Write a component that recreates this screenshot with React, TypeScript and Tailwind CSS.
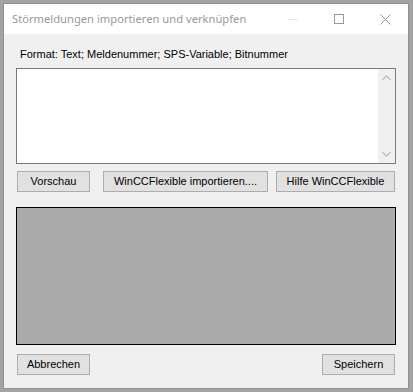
const font = { fontFamily: '"Liberation Sans", Arial, sans-serif' };

const WinButton = ({ label, className }: { label: string; className: string }) => (
  <button
    className={`h-[21px] bg-[#e1e1e1] border border-[#adadad] text-[11px] text-black leading-none flex items-center justify-center ${className}`}
  >
    {label}
  </button>
);

export default function App() {
  return (
    <div className="w-[413px] h-[392px] bg-[#a3a3a3] pt-[3px] pl-[3px]" style={font}>
      <div className="w-[406px] h-[386px] border border-[#8f8f8f] bg-[#f0f0f0] flex flex-col">
        {/* title bar */}
        <div className="h-[30px] bg-white flex items-center shrink-0">
          <span
            className="ml-[8px] mt-[1px] text-[11.2px] text-[#999999]"
            style={{ fontFamily: '"Noto Sans", "Open Sans", sans-serif' }}
          >
            Störmeldungen importieren und verknüpfen
          </span>
          <div className="ml-auto flex items-center">
            <div className="w-[46px] h-[30px] flex items-center justify-center">
              <div className="w-[10px] h-px bg-[#e6e6e6]" />
            </div>
            <div className="w-[46px] h-[30px] flex items-center justify-center">
              <div className="w-[10px] h-[10px] border border-[#999999]" />
            </div>
            <div className="w-[46px] h-[30px] flex items-center justify-center">
              <svg width="11" height="11" viewBox="0 0 11 11">
                <path d="M0.5 0.5 L10.5 10.5 M10.5 0.5 L0.5 10.5" stroke="#999999" strokeWidth="1" />
              </svg>
            </div>
          </div>
        </div>

        {/* content */}
        <div className="flex-1 px-[12px] flex flex-col">
          <div className="mt-[14px] ml-[4px] text-[11px] leading-[13px] text-black">
            Format: Text; Meldenummer; SPS-Variable; Bitnummer
          </div>

          <div className="mt-[7px] h-[96px] border border-[#7a7a7a] bg-white flex">
            <div className="flex-1" />
            <div className="w-[17px] bg-[#f0f0f0] flex flex-col items-center justify-between py-[6px]">
              <svg width="9" height="6" viewBox="0 0 9 6">
                <path d="M0.5 5 L4.5 1 L8.5 5" fill="none" stroke="#c2c2c2" strokeWidth="1.5" />
              </svg>
              <svg width="9" height="6" viewBox="0 0 9 6">
                <path d="M0.5 1 L4.5 5 L8.5 1" fill="none" stroke="#c2c2c2" strokeWidth="1.5" />
              </svg>
            </div>
          </div>

          <div className="mt-[7px] flex pl-[1px]">
            <WinButton label="Vorschau" className="w-[73px]" />
            <WinButton label="WinCCFlexible importieren...." className="w-[165px] ml-[13px]" />
            <WinButton label="Hilfe WinCCFlexible" className="w-[119px] ml-[8px]" />
          </div>

          <div className="mt-[15px] h-[138px] bg-[#ababab] border border-black" />

          <div className="mt-[9px] flex justify-between pl-[1px] pr-[1px]">
            <WinButton label="Abbrechen" className="w-[73px]" />
            <WinButton label="Speichern" className="w-[73px]" />
          </div>
        </div>
      </div>
    </div>
  );
}
